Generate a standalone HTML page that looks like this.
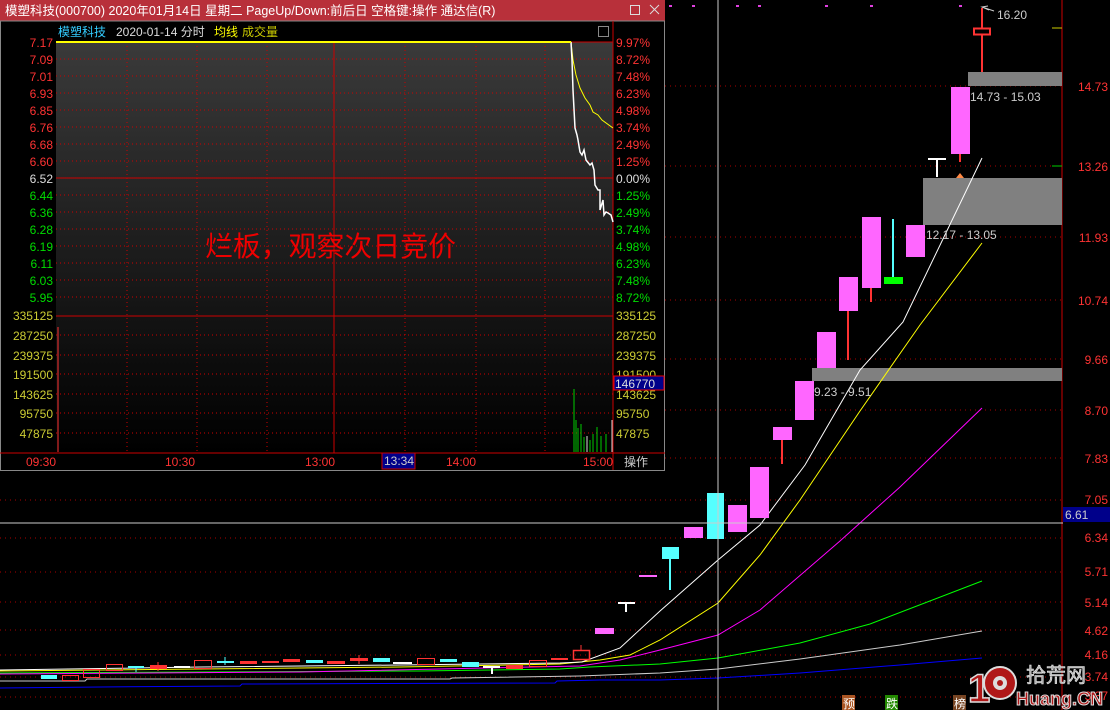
<!DOCTYPE html>
<html><head><meta charset="utf-8"><style>
html,body{margin:0;padding:0;background:#000;width:1110px;height:710px;overflow:hidden}
svg{display:block}
text{font-family:"Liberation Sans","Noto Sans CJK SC",sans-serif}
</style></head><body>
<svg width="1110" height="710" viewBox="0 0 1110 710" xmlns="http://www.w3.org/2000/svg">
<defs>
<linearGradient id="pg" x1="0" y1="0" x2="0" y2="1"><stop offset="0" stop-color="#3a3a3a"/><stop offset="1" stop-color="#000"/></linearGradient>
</defs>
<rect width="1110" height="710" fill="#000"/>
<g stroke="#a00" stroke-dasharray="1,4" stroke-width="1">
<line x1="0" y1="86" x2="1062" y2="86"/><line x1="0" y1="166" x2="1062" y2="166"/><line x1="0" y1="237" x2="1062" y2="237"/><line x1="0" y1="300" x2="1062" y2="300"/><line x1="0" y1="359" x2="1062" y2="359"/><line x1="0" y1="410" x2="1062" y2="410"/><line x1="0" y1="458" x2="1062" y2="458"/><line x1="0" y1="500" x2="1062" y2="500"/><line x1="0" y1="538" x2="1062" y2="538"/><line x1="0" y1="572" x2="1062" y2="572"/><line x1="0" y1="602" x2="1062" y2="602"/><line x1="0" y1="630" x2="1062" y2="630"/><line x1="0" y1="655" x2="1062" y2="655"/><line x1="0" y1="677" x2="1062" y2="677"/><line x1="0" y1="697" x2="1062" y2="697"/>
</g>
<line x1="1062" y1="0" x2="1062" y2="710" stroke="#c00"/>
<g fill="#e040e0"><rect x="669" y="5" width="3" height="2"/><rect x="692" y="5" width="3" height="2"/><rect x="736" y="5" width="3" height="2"/><rect x="758" y="5" width="3" height="2"/><rect x="825" y="5" width="3" height="2"/><rect x="870" y="5" width="3" height="2"/><rect x="959" y="5" width="3" height="2"/></g>
<line x1="1052" y1="28" x2="1062" y2="28" stroke="#cc0"/>
<line x1="1052" y1="166" x2="1062" y2="166" stroke="#0c0"/>
<rect x="968" y="72" width="94" height="14" fill="#808080"/>
<rect x="923" y="178" width="139" height="47" fill="#808080"/>
<rect x="812" y="368" width="250" height="13" fill="#808080"/>
<g fill="none" stroke-width="1">
<polyline stroke="#00f" points="0,688 100,687 240,686 242,684 555,683 557,681 600,680 660,680 718,678 800,673 900,665 982,658"/>
<polyline stroke="#ccc" points="0,681 85,681 87,679 450,679 452,678 580,676 660,673 718,669 800,659 900,645 982,631"/>
<polyline stroke="#0f0" points="0,673 200,672 420,671 560,669 590,667 660,664 718,658 800,643 870,624 982,581"/>
<polyline stroke="#f0f" points="0,674 150,673 300,672 580,666 620,660 660,650 718,635 760,610 840,541 900,487 982,408"/>
<polyline stroke="#ff0" points="0,671 200,669 400,667 560,664 600,660 630,655 660,640 718,603 760,555 800,500 860,411 920,325 982,243"/>
<polyline stroke="#fff" points="0,670 200,667 400,665 560,663 582,662 620,648 660,611 718,560 760,525 805,465 860,370 903,322 982,158"/>
</g>
<g>
<rect x="41" y="675" width="16" height="4" fill="#5ff"/>
<rect x="62.5" y="675.5" width="16" height="5" fill="none" stroke="#f33"/>
<rect x="83.5" y="669.5" width="16" height="8" fill="none" stroke="#f33"/>
<rect x="106.5" y="664.5" width="16" height="6" fill="none" stroke="#f33"/>
<rect x="128" y="666" width="16" height="2" fill="#5ff"/><line x1="136" y1="666" x2="136" y2="672" stroke="#5ff"/>
<rect x="150" y="665" width="17" height="4" fill="#f33"/><line x1="158" y1="662" x2="158" y2="671" stroke="#f33"/>
<rect x="174" y="666" width="16" height="2" fill="#fff"/>
<rect x="194.5" y="660.5" width="17" height="8" fill="none" stroke="#f33"/>
<rect x="217" y="661" width="17" height="2" fill="#5ff"/><line x1="225" y1="657" x2="225" y2="665" stroke="#5ff"/>
<rect x="240" y="661" width="17" height="3" fill="#f33"/>
<rect x="262" y="661" width="17" height="2" fill="#f33"/>
<rect x="283" y="659" width="17" height="3" fill="#f33"/>
<rect x="306" y="660" width="17" height="3" fill="#5ff"/>
<rect x="327" y="661" width="18" height="3" fill="#f33"/>
<rect x="350" y="658" width="18" height="3" fill="#f33"/><line x1="359" y1="655" x2="359" y2="664" stroke="#f33"/>
<rect x="373" y="658" width="17" height="4" fill="#5ff"/>
<rect x="393" y="662" width="19" height="2" fill="#fff"/>
<rect x="417.5" y="658.5" width="17" height="6" fill="none" stroke="#f33"/>
<rect x="440" y="659" width="17" height="3" fill="#5ff"/>
<rect x="462" y="662" width="17" height="5" fill="#5ff"/>
<rect x="483" y="666" width="17" height="2" fill="#fff"/><line x1="492" y1="666" x2="492" y2="674" stroke="#fff" stroke-width="2"/>
<rect x="506" y="665" width="17" height="4" fill="#f33"/>
<rect x="529.5" y="660.5" width="17" height="6" fill="none" stroke="#f33"/>
<rect x="551" y="658" width="17" height="2" fill="#f33"/>
<rect x="573.5" y="650.5" width="16" height="9" fill="none" stroke="#f33" stroke-width="1.5"/><line x1="581" y1="645" x2="581" y2="650" stroke="#f33"/>
<rect x="595" y="628" width="19" height="6" fill="#f6f"/>
<rect x="618" y="602" width="17" height="2" fill="#fff"/><line x1="626" y1="602" x2="626" y2="612" stroke="#fff" stroke-width="2"/>
<rect x="639" y="575" width="18" height="2" fill="#f6f"/>
<rect x="662" y="547" width="17" height="12" fill="#5ff"/><line x1="670" y1="559" x2="670" y2="590" stroke="#5ff" stroke-width="2"/>
<rect x="684" y="527" width="19" height="11" fill="#f6f"/>
<rect x="707" y="493" width="17" height="46" fill="#5ff"/>
<rect x="728" y="505" width="19" height="27" fill="#f6f"/>
<rect x="750" y="467" width="19" height="51" fill="#f6f"/>
<line x1="782" y1="440" x2="782" y2="464" stroke="#f33" stroke-width="2"/><rect x="773" y="427" width="19" height="13" fill="#f6f"/>
<rect x="795" y="381" width="19" height="39" fill="#f6f"/>
<rect x="817" y="332" width="19" height="36" fill="#f6f"/>
<line x1="848" y1="311" x2="848" y2="360" stroke="#f33" stroke-width="2"/><rect x="839" y="277" width="19" height="34" fill="#f6f"/>
<line x1="871" y1="288" x2="871" y2="302" stroke="#f33" stroke-width="2"/><rect x="862" y="217" width="19" height="71" fill="#f6f"/>
<line x1="893" y1="219" x2="893" y2="280" stroke="#5ff" stroke-width="2"/><rect x="884" y="277" width="19" height="7" fill="#0f0"/>
<rect x="906" y="225" width="19" height="32" fill="#f6f"/>
<rect x="928" y="158" width="18" height="2" fill="#fff"/><line x1="937" y1="159" x2="937" y2="177" stroke="#fff" stroke-width="2"/>
<polygon points="956,178 960,173 964,178" fill="#f84"/>
<line x1="960" y1="154" x2="960" y2="162" stroke="#f33" stroke-width="2"/><rect x="951" y="87" width="19" height="67" fill="#f6f"/>
<line x1="982" y1="8" x2="982" y2="72" stroke="#f33" stroke-width="2"/><rect x="974" y="28.5" width="16" height="6" fill="#000" stroke="#f33" stroke-width="2"/>
<polyline points="989,10 982,7 988,6" fill="none" stroke="#ccc"/><line x1="982" y1="7" x2="994" y2="11" stroke="#ccc"/>
</g>
<g font-size="12" fill="#ccc"><text x="997" y="19">16.20</text><text x="970" y="101">14.73 - 15.03</text><text x="926" y="239">12.17 - 13.05</text><text x="814" y="396">9.23 - 9.51</text></g>
<line x1="718" y1="0" x2="718" y2="710" stroke="#ccc"/>
<line x1="0" y1="523" x2="1063" y2="523" stroke="#ccc"/>
<rect x="1063" y="507" width="47" height="15" fill="#00008a"/>
<text x="1065" y="519" font-size="12" fill="#ccc">6.61</text>
<g font-size="12" fill="#f33" text-anchor="end">
<text x="1108" y="91">14.73</text><text x="1108" y="171">13.26</text><text x="1108" y="242">11.93</text><text x="1108" y="305">10.74</text><text x="1108" y="364">9.66</text><text x="1108" y="415">8.70</text><text x="1108" y="463">7.83</text><text x="1108" y="504">7.05</text><text x="1108" y="542">6.34</text><text x="1108" y="576">5.71</text><text x="1108" y="607">5.14</text><text x="1108" y="635">4.62</text><text x="1108" y="659">4.16</text><text x="1108" y="681">3.74</text><text x="1108" y="700">3.37</text>
</g>
<rect x="842" y="695" width="13" height="15" fill="#a52"/><text x="843" y="708" font-size="12" fill="#fff">预</text>
<rect x="885" y="695" width="13" height="15" fill="#280"/><text x="886" y="708" font-size="12" fill="#fff">跌</text>
<rect x="953" y="695" width="13" height="15" fill="#742"/><text x="954" y="708" font-size="12" fill="#fff">榜</text>
<g>
<text x="968" y="702" font-size="40" font-weight="bold" fill="#b01818" stroke="#ddd" stroke-width="1.5">1</text>
<circle cx="1000" cy="683" r="16" fill="#b01818" stroke="#ddd" stroke-width="2"/>
<circle cx="1000" cy="683" r="7" fill="#ddd"/><circle cx="1000" cy="683" r="3" fill="#b01818"/>
<text x="1026" y="682" font-size="20" fill="#aaa" stroke="#eee" stroke-width="0.6">拾荒网</text>
<text x="1016" y="705" font-size="18" font-weight="bold" fill="#b01818" stroke="#ddd" stroke-width="1">Huang.CN</text>
</g>
<rect x="0" y="0" width="665" height="471" fill="#000"/>
<rect x="0" y="0" width="665" height="21" fill="#b8303a"/>
<text x="5" y="15" font-size="12.5" fill="#fff">模塑科技(000700) 2020年01月14日 星期二 PageUp/Down:前后日 空格键:操作 通达信(R)</text>
<rect x="630.5" y="5.5" width="9" height="9" fill="none" stroke="#ddd"/>
<path d="M650 5 L659 14 M659 5 L650 14" stroke="#ddd"/>
<rect x="0.5" y="21" width="664" height="449.5" fill="none" stroke="#888"/>
<rect x="56" y="42" width="557" height="411" fill="url(#pg)"/>
<text x="58" y="36" font-size="12" fill="#3cf">模塑科技</text>
<text x="116" y="36" font-size="12" fill="#ddd">2020-01-14 分时</text>
<text x="214" y="36" font-size="12" fill="#ff0">均线</text>
<text x="242" y="36" font-size="12" fill="#cc0">成交量</text>
<rect x="598.5" y="26.5" width="10" height="10" fill="none" stroke="#888"/>
<g stroke="#c00" stroke-dasharray="1,3">
<line x1="56" y1="59" x2="613" y2="59"/><line x1="56" y1="76" x2="613" y2="76"/><line x1="56" y1="93" x2="613" y2="93"/><line x1="56" y1="110" x2="613" y2="110"/><line x1="56" y1="127" x2="613" y2="127"/><line x1="56" y1="144" x2="613" y2="144"/><line x1="56" y1="161" x2="613" y2="161"/><line x1="56" y1="195" x2="613" y2="195"/><line x1="56" y1="212" x2="613" y2="212"/><line x1="56" y1="229" x2="613" y2="229"/><line x1="56" y1="246" x2="613" y2="246"/><line x1="56" y1="263" x2="613" y2="263"/><line x1="56" y1="280" x2="613" y2="280"/><line x1="56" y1="297" x2="613" y2="297"/>
<line x1="56" y1="335" x2="613" y2="335"/><line x1="56" y1="355" x2="613" y2="355"/><line x1="56" y1="374" x2="613" y2="374"/><line x1="56" y1="394" x2="613" y2="394"/><line x1="56" y1="413" x2="613" y2="413"/><line x1="56" y1="433" x2="613" y2="433"/>
<line x1="127" y1="42" x2="127" y2="453"/><line x1="197" y1="42" x2="197" y2="453"/><line x1="267" y1="42" x2="267" y2="453"/><line x1="405" y1="42" x2="405" y2="453"/><line x1="476" y1="42" x2="476" y2="453"/><line x1="545" y1="42" x2="545" y2="453"/>
</g>
<g stroke="#c00"><line x1="56" y1="42" x2="613" y2="42"/><line x1="56" y1="178" x2="613" y2="178"/><line x1="56" y1="316" x2="613" y2="316"/><line x1="334" y1="42" x2="334" y2="453"/><line x1="613" y1="21" x2="613" y2="470"/><line x1="0" y1="453" x2="665" y2="453"/></g>
<line x1="58" y1="327" x2="58" y2="452" stroke="#f33"/>
<g stroke="#0c0"><line x1="574" y1="389" x2="574" y2="452"/><line x1="576" y1="420" x2="576" y2="452"/><line x1="578" y1="428" x2="578" y2="452"/><line x1="581" y1="424" x2="581" y2="452"/><line x1="584" y1="437" x2="584" y2="452"/><line x1="590" y1="440" x2="590" y2="452"/><line x1="593" y1="434" x2="593" y2="452"/><line x1="597" y1="427" x2="597" y2="452"/><line x1="601" y1="436" x2="601" y2="452"/><line x1="606" y1="434" x2="606" y2="452"/></g>
<g stroke="#ddd"><line x1="587" y1="436" x2="587" y2="452"/><line x1="612" y1="420" x2="612" y2="452"/></g>
<polyline fill="none" stroke="#ff0" points="56,42 571,42 573,60 576,75 580,88 585,98 590,105 593,112 598,115 602,120 613,128"/>
<polyline fill="none" stroke="#fff" stroke-width="1.5" points="571,42 572,60 573,90 575,128 577,135 578,140 580,152 582,155 584,150 586,160 590,165 592,163 594,170 595,185 598,190 600,190 600,210 603,200 604,215 606,212 608,213 611,215 613,222"/>
<line x1="56" y1="42" x2="571" y2="42" stroke="#ff0" stroke-width="2"/>
<text x="205" y="256" font-size="28" fill="#e00" textLength="251" lengthAdjust="spacingAndGlyphs">烂板，观察次日竞价</text>
<g font-size="12" text-anchor="end">
<text x="53" y="47" fill="#f33">7.17</text><text x="53" y="64" fill="#f33">7.09</text><text x="53" y="81" fill="#f33">7.01</text><text x="53" y="98" fill="#f33">6.93</text><text x="53" y="115" fill="#f33">6.85</text><text x="53" y="132" fill="#f33">6.76</text><text x="53" y="149" fill="#f33">6.68</text><text x="53" y="166" fill="#f33">6.60</text><text x="53" y="183" fill="#ddd">6.52</text>
<text x="53" y="200" fill="#0d0">6.44</text><text x="53" y="217" fill="#0d0">6.36</text><text x="53" y="234" fill="#0d0">6.28</text><text x="53" y="251" fill="#0d0">6.19</text><text x="53" y="268" fill="#0d0">6.11</text><text x="53" y="285" fill="#0d0">6.03</text><text x="53" y="302" fill="#0d0">5.95</text>
<text x="53" y="320" fill="#cc3">335125</text><text x="53" y="340" fill="#cc3">287250</text><text x="53" y="360" fill="#cc3">239375</text><text x="53" y="379" fill="#cc3">191500</text><text x="53" y="399" fill="#cc3">143625</text><text x="53" y="418" fill="#cc3">95750</text><text x="53" y="438" fill="#cc3">47875</text>
</g>
<g font-size="12">
<text x="616" y="47" fill="#f33">9.97%</text><text x="616" y="64" fill="#f33">8.72%</text><text x="616" y="81" fill="#f33">7.48%</text><text x="616" y="98" fill="#f33">6.23%</text><text x="616" y="115" fill="#f33">4.98%</text><text x="616" y="132" fill="#f33">3.74%</text><text x="616" y="149" fill="#f33">2.49%</text><text x="616" y="166" fill="#f33">1.25%</text><text x="616" y="183" fill="#ddd">0.00%</text>
<text x="616" y="200" fill="#0d0">1.25%</text><text x="616" y="217" fill="#0d0">2.49%</text><text x="616" y="234" fill="#0d0">3.74%</text><text x="616" y="251" fill="#0d0">4.98%</text><text x="616" y="268" fill="#0d0">6.23%</text><text x="616" y="285" fill="#0d0">7.48%</text><text x="616" y="302" fill="#0d0">8.72%</text>
<text x="616" y="320" fill="#cc3">335125</text><text x="616" y="340" fill="#cc3">287250</text><text x="616" y="360" fill="#cc3">239375</text><text x="616" y="379" fill="#cc3">191500</text><text x="616" y="399" fill="#cc3">143625</text><text x="616" y="418" fill="#cc3">95750</text><text x="616" y="438" fill="#cc3">47875</text>
</g>
<rect x="614" y="376" width="50" height="14" fill="#00008a" stroke="#e00"/>
<text x="615" y="388" font-size="12" fill="#ddd">146770</text>
<g font-size="12" fill="#f33"><text x="26" y="466">09:30</text><text x="165" y="466">10:30</text><text x="305" y="466">13:00</text><text x="446" y="466">14:00</text><text x="583" y="466">15:00</text></g>
<rect x="382" y="453" width="33" height="16" fill="#00008a" stroke="#c00"/>
<text x="384" y="465" font-size="12" fill="#ccc">13:34</text>
<text x="624" y="466" font-size="12" fill="#ccc">操作</text>
</svg>
</body></html>
